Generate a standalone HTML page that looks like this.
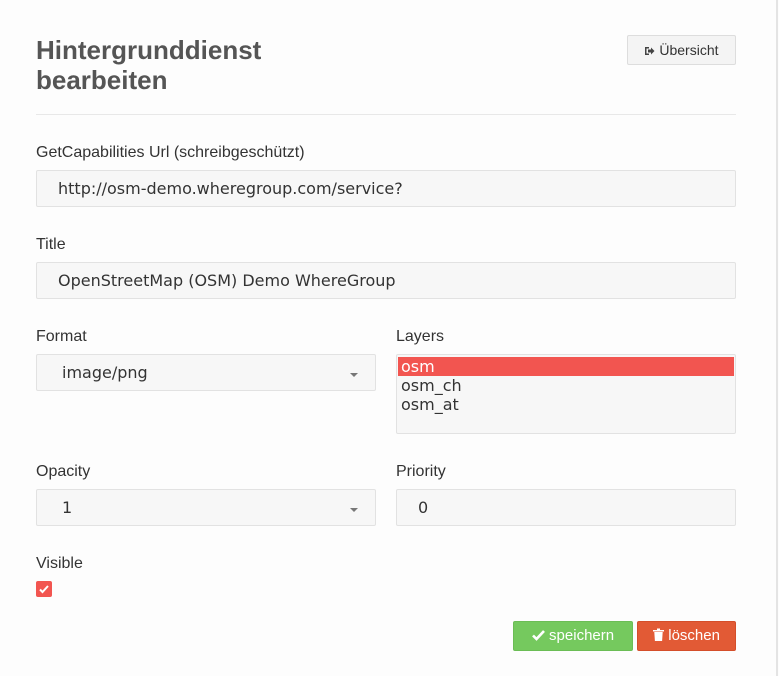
<!DOCTYPE html>
<html><head><style>
body{margin:0;width:779px;height:676px;background:#fdfdfd;font-family:"Liberation Sans",sans-serif;color:#333;position:relative;overflow:hidden}
.a{position:absolute}
.rb{position:absolute;left:776px;top:0;width:2px;height:676px;background:#e4e4e4}
h1{position:absolute;left:36px;top:35px;margin:0;font-size:26px;line-height:30px;font-weight:bold;color:#555}
.lbl{position:absolute;font-size:16px;color:#333}
.in{position:absolute;background:#f7f7f7;border:1px solid #e2e2e2;box-sizing:border-box;font-family:"DejaVu Sans",sans-serif;font-size:16px;color:#333;border-radius:2px}
.caret{position:absolute;right:17px;top:18px;width:0;height:0;border-left:4px solid transparent;border-right:4px solid transparent;border-top:4px solid #777}
.btn{position:absolute;box-sizing:border-box;font-size:15px;color:#fff;text-align:center;line-height:28px;border-radius:2px}
</style></head><body>
<div class="rb"></div>
<h1>Hintergrunddienst<br>bearbeiten</h1>
<div class="a" style="left:627px;top:35px;width:109px;height:30px;box-sizing:border-box;border:1px solid #ddd;background:#f4f4f4;border-radius:2px;font-size:14px;line-height:28px;text-align:center;color:#333">
<svg width="11" height="10" viewBox="0 0 11 10" style="vertical-align:-1px"><path d="M1 1h4v1.5H2.5v5H5V9H1z" fill="#444"/><path d="M4 3.5h3V1.5l3.5 3.5L7 8.5V6.5H4z" fill="#444"/></svg> Übersicht</div>
<div class="a" style="left:36px;top:114px;width:700px;height:1px;background:#e8e8e8"></div>
<div class="lbl" style="left:36px;top:144px">GetCapabilities Url (schreibgeschützt)</div>
<div class="in" style="left:36px;top:170px;width:700px;height:37px;padding:8px 0 0 21px">http://osm-demo.wheregroup.com/service?</div>
<div class="lbl" style="left:36px;top:236px">Title</div>
<div class="in" style="left:36px;top:262px;width:700px;height:37px;padding:8px 0 0 21px">OpenStreetMap (OSM) Demo WhereGroup</div>
<div class="lbl" style="left:36px;top:328px">Format</div>
<div class="in" style="left:36px;top:354px;width:340px;height:37px;padding:8px 0 0 25px">image/png<div class="caret"></div></div>
<div class="lbl" style="left:396px;top:328px">Layers</div>
<div class="in" style="left:396px;top:354px;width:340px;height:80px;padding:2px 1px 0 1px;line-height:19px">
<div style="background:#f25550;color:#fff;padding-left:3px">osm</div>
<div style="padding-left:3px">osm_ch</div>
<div style="padding-left:3px">osm_at</div></div>
<div class="lbl" style="left:36px;top:463px">Opacity</div>
<div class="in" style="left:36px;top:489px;width:340px;height:37px;padding:8px 0 0 25px">1<div class="caret"></div></div>
<div class="lbl" style="left:396px;top:463px">Priority</div>
<div class="in" style="left:396px;top:489px;width:340px;height:37px;padding:8px 0 0 21px">0</div>
<div class="lbl" style="left:36px;top:555px">Visible</div>
<div class="a" style="left:36px;top:581px;width:16px;height:16px;background:#f25550;border-radius:2px"><svg width="16" height="16"><path d="M4 8.5l2.5 2.5L12 5" stroke="#fff" stroke-width="2" fill="none"/></svg></div>
<div class="btn" style="left:513px;top:621px;width:120px;height:30px;background:#75c95e;border:1px solid #6bbd55">
<svg width="13" height="12" viewBox="0 0 13 12" style="vertical-align:-1px"><path d="M1 6.5l3.5 3.5L12 2" stroke="#fff" stroke-width="2.6" fill="none"/></svg> speichern</div>
<div class="btn" style="left:637px;top:621px;width:99px;height:30px;background:#e25a35;border:1px solid #d44e2a">
<svg width="11" height="13" viewBox="0 0 11 13" style="vertical-align:-1px"><path d="M0 2h11v1.5H0zM4 0.5h3V2H4zM1.3 4h8.4l-.6 9H1.9z" fill="#fff"/></svg> löschen</div>
</body></html>
